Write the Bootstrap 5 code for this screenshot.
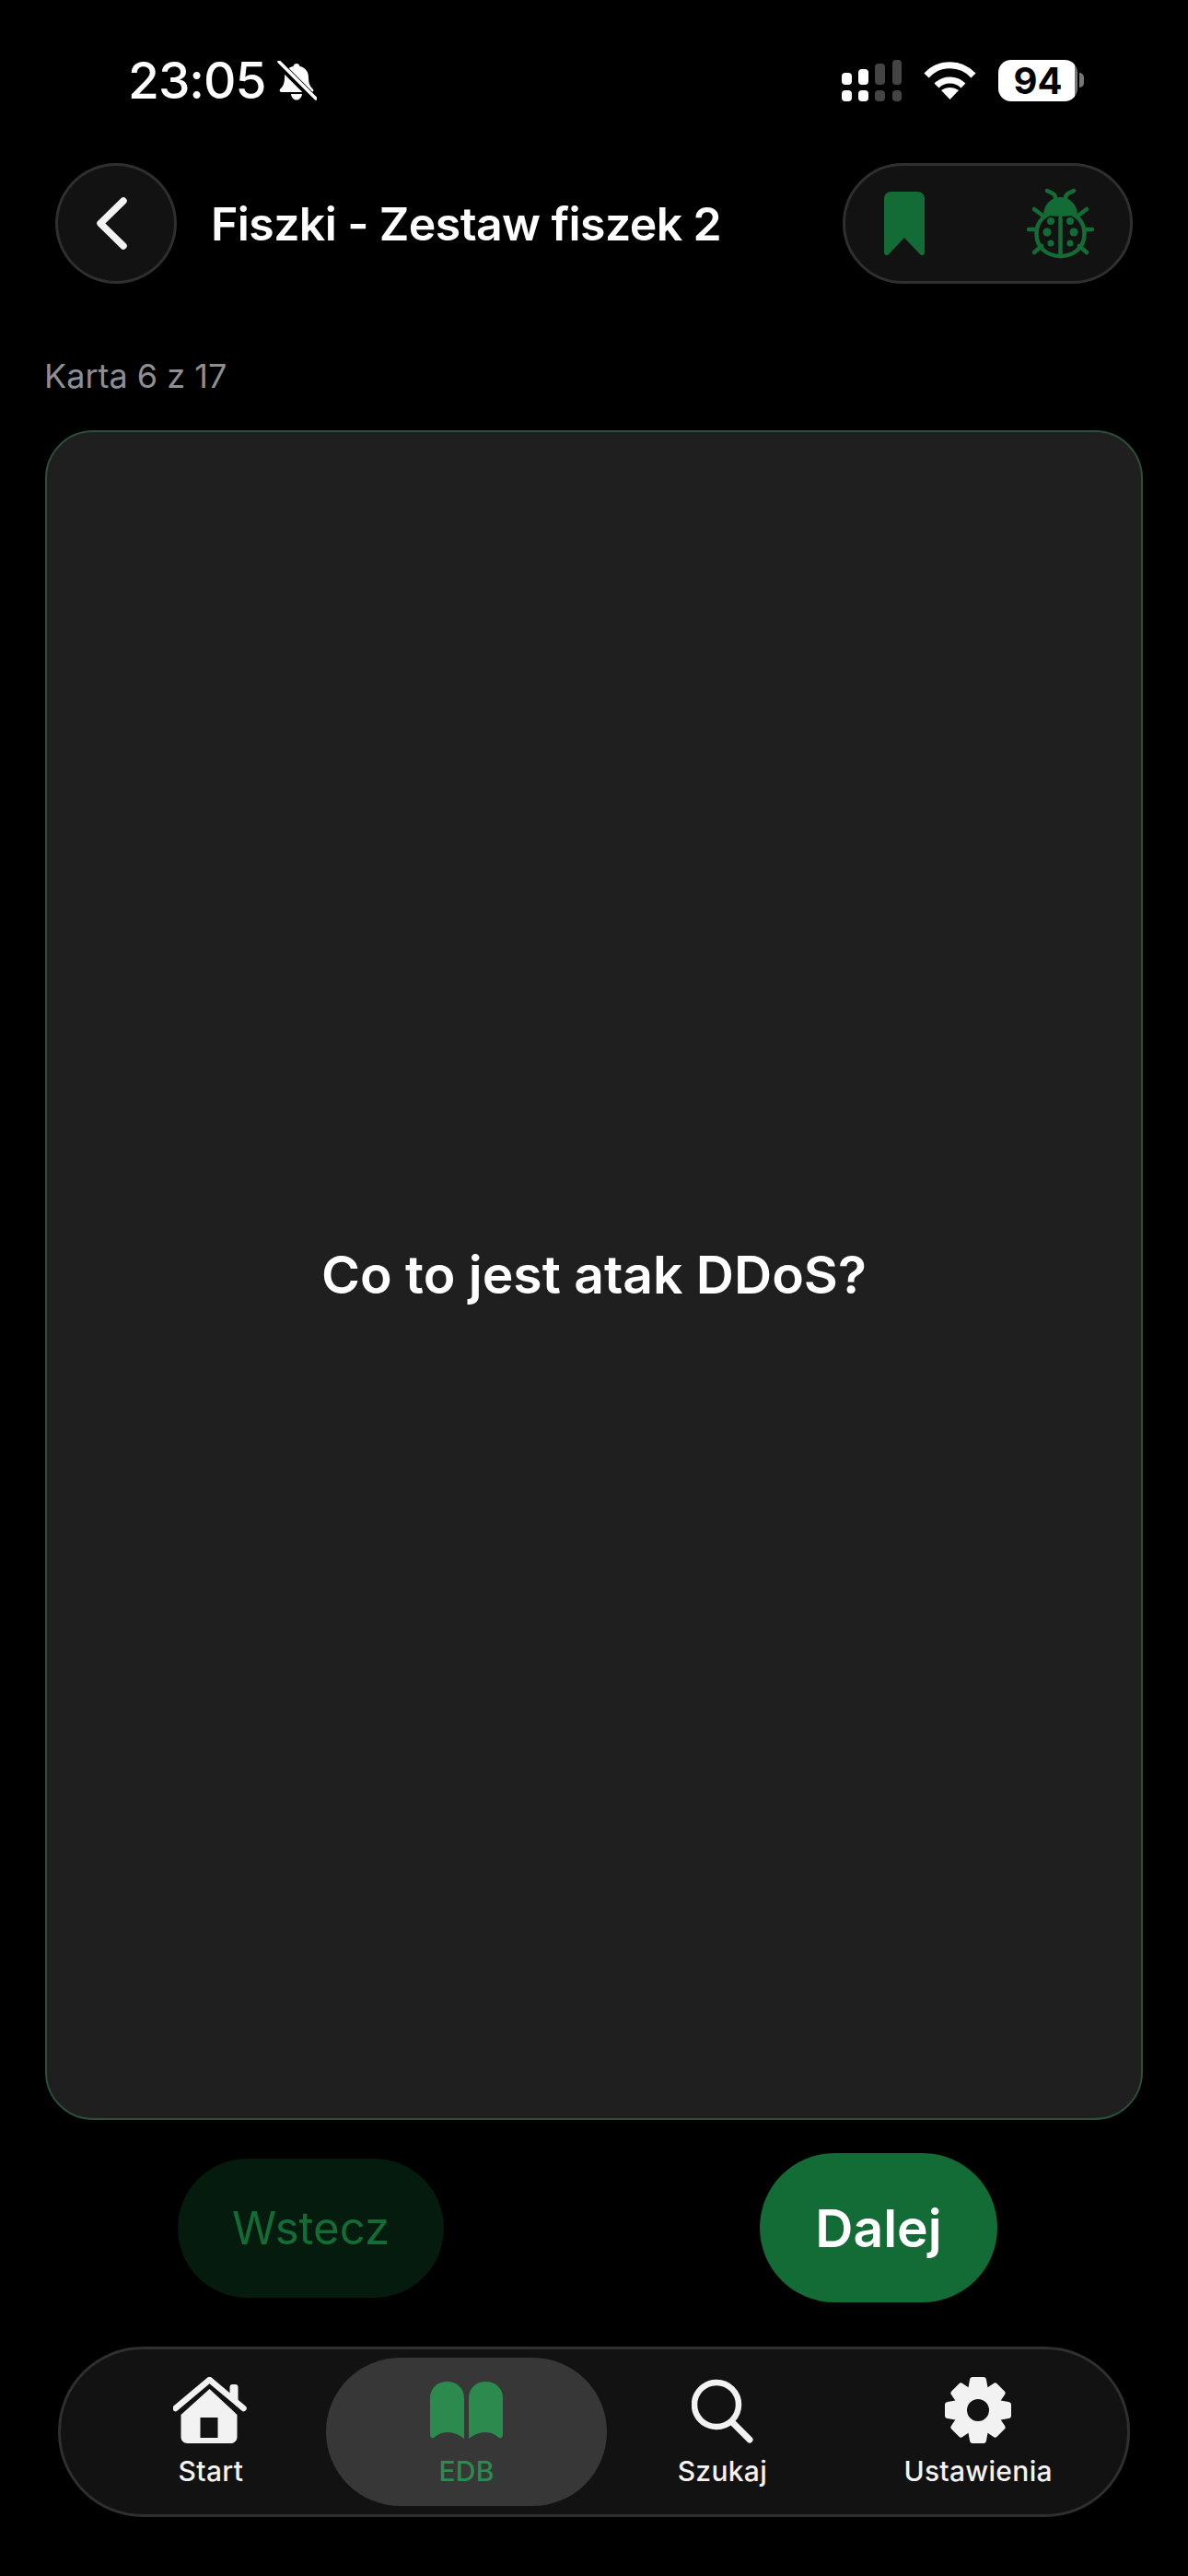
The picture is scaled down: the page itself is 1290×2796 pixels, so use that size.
<!DOCTYPE html>
<html lang="pl">
<head>
    <meta charset="UTF-8">
    <meta name="viewport" content="width=device-width, initial-scale=1.0">
    <title>Fiszki - Zestaw fiszek 2</title>
    <link href="https://cdn.jsdelivr.net/npm/bootstrap@5.3.2/dist/css/bootstrap.min.css" rel="stylesheet">
    <style>
body {
    background: #000;
    width: 1290px;
    height: 2796px;
    overflow: hidden;
    font-family: Inter, "Liberation Sans", sans-serif;
    color: #fff;
}

.status-bar {
    height: 177px;
    padding: 0 113px 3px 139px;
}

.status-time {
    font-size: 55px;
    font-weight: 500;
    line-height: 1;
    letter-spacing: -1px;
    margin-right: 12px;
}

.battery-box {
    width: 86px;
    height: 45px;
    border-radius: 14px;
    background: linear-gradient(90deg, #fff 96%, #777 96%);
    color: #000;
    font-size: 40px;
    font-weight: 700;
    line-height: 45px;
    text-align: center;
}

.battery-nub {
    width: 5px;
    height: 16px;
    margin-left: 2px;
    border-radius: 0 5px 5px 0;
    background: #777;
}

.top-bar {
    height: 131px;
    padding: 0 60px;
}

.glass-box {
    background: #121212;
    border: 3px solid #2f2f2f;
}

.back-btn {
    width: 132px;
    height: 131px;
    border-radius: 50%;
    padding: 0 9px 0 0;
}

.top-title {
    margin: 0 0 0 37px;
    font-size: 50px;
    font-weight: 600;
    line-height: 1;
    letter-spacing: -0.6px;
}

.action-pill {
    width: 315px;
    height: 131px;
    border-radius: 66px;
    padding: 0 39px 0 42px;
}

.card-count {
    height: 159px;
    padding: 40px 48px 0;
    font-size: 36px;
    line-height: 1;
    color: #8e8e93;
}

.flash-card {
    height: 1834px;
    margin: 0 49px;
    background: #1f1f1f;
    border: 2px solid #2c4f38;
    border-radius: 52px;
    font-size: 57px;
    font-weight: 600;
}

.nav-buttons {
    height: 162px;
    margin-top: 36px;
    padding-left: 193px;
    gap: 343px;
}

.nav-btn {
    border: 0;
    padding: 0;
    line-height: 1;
}

.btn-prev {
    width: 289px;
    height: 151px;
    border-radius: 76px;
    background: #041b0d;
    color: #136b35;
    font-size: 49px;
}

.btn-next {
    width: 258px;
    height: 162px;
    border-radius: 81px;
    background: #136b35;
    color: #fff;
    font-size: 57px;
    font-weight: 600;
}

.tab-bar {
    width: 1164px;
    height: 185px;
    margin: 48px 0 0 63px;
    padding: 9px 23px 9px 24px;
    border-radius: 92px;
}

.tab-item {
    width: 278px;
    color: #f2f2f2;
    font-size: 30px;
    font-weight: 500;
    line-height: 1;
    letter-spacing: 0.3px;
    border-radius: 81px;
}

.tab-item.is-active {
    width: 306px;
    margin: 0 -14px;
    background: #373737;
    color: #2d8a4f;
}

.tab-icon {
    height: 72px;
    margin: 21px 0 15px;
}
    </style>
</head>
<body>
<div class="status-bar d-flex align-items-center">
    <span class="status-time">23:05</span>
    <svg width="43" height="43" viewBox="0 0 43 43">
        <path d="M21 3c2 0 3 1 3.500 3 6 1 9.500 6 9.500 12 0 7 2 10 5 13 1 2 0 3-2 3H5c-2 0-3-1-2-3 3-3 5-6 5-13 0-6 3.500-11 9.500-12C18 4 19 3 21 3zM15 36h12c-.5 4-3 6.500-6 6.500S15.500 40 15 36z" fill="#fff"/>
        <path d="M2 3l38 38" stroke="#000" stroke-width="8"/>
        <path d="M2 1l40 40" stroke="#fff" stroke-width="3.500" stroke-linecap="round"/>
    </svg>
    <div class="d-flex align-items-center ms-auto">
        <svg width="65" height="45" viewBox="0 0 65 45">
            <g fill="#fff">
                <rect x="0" y="14" width="11" height="13" rx="4"/>
                <rect x="18" y="10" width="11" height="17" rx="4"/>
                <rect x="0" y="33" width="11" height="12" rx="4"/>
                <rect x="18" y="33" width="11" height="12" rx="4"/>
            </g>
            <g fill="#444">
                <rect x="36" y="4" width="11" height="23" rx="4"/>
                <rect x="55" y="0" width="10" height="27" rx="4"/>
                <rect x="36" y="33" width="11" height="12" rx="4"/>
                <rect x="55" y="33" width="10" height="12" rx="4"/>
            </g>
        </svg>
        <svg class="mx-4" width="57" height="41" viewBox="0 0 57 41">
            <path d="M3 15C17 0 40 0 54 15" fill="none" stroke="#fff" stroke-width="7"/>
            <path d="M14 26c8-8 21-8 29 0" fill="none" stroke="#fff" stroke-width="7"/>
            <path d="M19 31c6-4 13-4 19 0l-9.500 10z" fill="#fff"/>
        </svg>
        <div class="battery-box">94</div>
        <div class="battery-nub"></div>
    </div>
</div>

<header class="top-bar d-flex align-items-center">
    <button class="glass-box back-btn d-flex align-items-center justify-content-center" type="button" aria-label="Wstecz">
        <svg width="33" height="57" viewBox="0 0 33 57">
            <path d="M29 4L4 28.500 29 53" fill="none" stroke="#f2f2f2" stroke-width="7.500" stroke-linecap="round" stroke-linejoin="round"/>
        </svg>
    </button>
    <h1 class="top-title">Fiszki - Zestaw fiszek 2</h1>
    <div class="glass-box action-pill d-flex align-items-center justify-content-between ms-auto">
        <svg width="44" height="69" viewBox="0 0 44 69">
            <path d="M8 0h28c5 0 8 3 8 8v58c0 3-3 4-5 2L22 50 5 68c-2 2-5 1-5-2V8c0-5 3-8 8-8z" fill="#136b35"/>
        </svg>
        <svg width="73" height="77" viewBox="0 0 73 77">
            <g fill="none" stroke="#136b35" stroke-width="4.500" stroke-linecap="round">
                <path d="M36.500 26c-17 0-26 10-26 24 0 15 12 24 26 24s26-9 26-24c0-14-9-24-26-24z"/>
                <path d="M36.500 33v39M2 45h8M63 45h8M8 23l8 6M65 23l-8 6M8 70l8-7M65 70l-8-7"/>
                <path d="M22 3l6 3c2 1 3 3 3 5M51 3l-6 3c-2 1-3 3-3 5"/>
            </g>
            <path d="M18 28c1-11 9-18 18.500-18S54 17 55 28c-11 4-26 4-37 0z" fill="#136b35"/>
            <g fill="#136b35">
                <circle cx="26" cy="36" r="4"/><circle cx="47" cy="36" r="4"/>
                <circle cx="22" cy="48" r="4.500"/><circle cx="51" cy="48" r="4.500"/>
                <circle cx="26" cy="60" r="3.500"/><circle cx="47" cy="60" r="3.500"/>
            </g>
        </svg>
    </div>
</header>

<div class="card-count d-flex align-items-center">Karta 6 z 17</div>

<main class="flash-card d-flex align-items-center justify-content-center">
    <span>Co to jest atak DDoS?</span>
</main>

<div class="nav-buttons d-flex align-items-center">
    <button class="nav-btn btn-prev" type="button" disabled>Wstecz</button>
    <button class="nav-btn btn-next" type="button">Dalej</button>
</div>

<nav class="glass-box tab-bar d-flex">
    <div class="tab-item d-flex flex-column align-items-center">
        <svg class="tab-icon" width="82" height="72" viewBox="1.500 0 82 72">
            <path d="M41 13L71 41v24c0 4-3 7-7 7H17c-4 0-7-3-7-7V41zM31 44v22h19V44z" fill="#f2f2f2" fill-rule="evenodd"/>
            <path d="M4 34L41 3 78 34" fill="none" stroke="#f2f2f2" stroke-width="6.500" stroke-linecap="round" stroke-linejoin="round"/>
            <path d="M63 22V11c0-2 1-3 3-3h3c2 0 3 1 3 3v18z" fill="#f2f2f2"/>
        </svg>
        <span>Start</span>
    </div>
    <div class="tab-item is-active d-flex flex-column align-items-center">
        <svg class="tab-icon" width="79" height="72" viewBox="0 -5 79 72">
            <g fill="#2d8a4f">
                <path d="M0 57V18C0 7 8 0 18.500 0S37 7 37 18v44c-5-4-11-7-18-7-7 0-11 3-15 6-2 1-4 0-4-4z"/>
                <path d="M79 57V18C79 7 71 0 60.500 0S42 7 42 18v44c5-4 11-7 18-7 7 0 11 3 15 6 2 1 4 0 4-4z"/>
            </g>
        </svg>
        <span>EDB</span>
    </div>
    <div class="tab-item d-flex flex-column align-items-center">
        <svg class="tab-icon" width="67" height="72" viewBox="0 -3 67 72">
            <circle cx="27" cy="27" r="24" fill="none" stroke="#f2f2f2" stroke-width="6.500"/>
            <path d="M44 46l19 19" stroke="#f2f2f2" stroke-width="7" stroke-linecap="round"/>
        </svg>
        <span>Szukaj</span>
    </div>
    <div class="tab-item d-flex flex-column align-items-center">
        <svg class="tab-icon" width="72" height="72" viewBox="-36 -36 72 72">
            <defs>
                <path id="gearTooth" d="M-6-36H6Q8.500-36 9-33L11-22H-11L-9-33Q-8.500-36-6-36z" fill="#f2f2f2"/>
            </defs>
            <circle r="19" fill="none" stroke="#f2f2f2" stroke-width="14"/>
            <use href="#gearTooth"/>
            <use href="#gearTooth" transform="rotate(45) scale(.97)"/>
            <use href="#gearTooth" transform="rotate(90)"/>
            <use href="#gearTooth" transform="rotate(135) scale(.97)"/>
            <use href="#gearTooth" transform="rotate(180)"/>
            <use href="#gearTooth" transform="rotate(225) scale(.97)"/>
            <use href="#gearTooth" transform="rotate(270)"/>
            <use href="#gearTooth" transform="rotate(315) scale(.97)"/>
        </svg>
        <span>Ustawienia</span>
    </div>
</nav>

<script src="https://cdn.jsdelivr.net/npm/bootstrap@5.3.2/dist/js/bootstrap.bundle.min.js"></script>
</body>
</html>
